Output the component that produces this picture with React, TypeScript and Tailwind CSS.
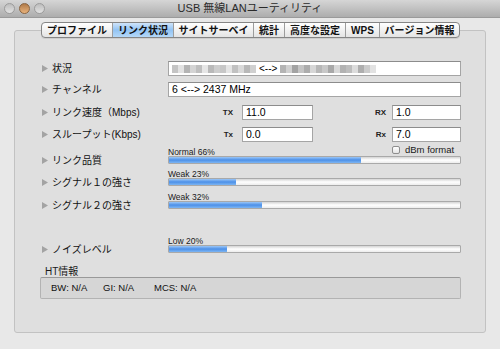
import React from 'react';

const tabs = [
  { name: 'プロファイル', w: 'w-[70px]' },
  { name: 'リンク状況', w: 'w-[61px]', active: true },
  { name: 'サイトサーベイ', w: 'w-[80px]' },
  { name: '統計', w: 'w-[31px]' },
  { name: '高度な設定', w: 'w-[61px]' },
  { name: 'WPS', w: 'w-[34px]' },
  { name: 'バージョン情報', w: 'w-[80px]' },
];

// mosaic blocks standing in for the blurred MAC addresses
const mosaicA = ['#c4c4c4', '#e2e2e2', '#b4b4b4', '#d4d4d4', '#bfbfbf', '#e6e6e6', '#b9b9b9', '#cdcdcd', '#c7c7c7', '#e5e5e5', '#c1c1c1', '#d9d9d9', '#b8b8b8', '#d0d0d0'];
const mosaicB = ['#b4b4b4', '#d0d0d0', '#a3a3a3', '#c4c4c4', '#acacac', '#d6d6d6', '#b7b7b7', '#c8c8c8', '#a8a8a8', '#d8d8d8', '#b2b2b2', '#bdbdbd', '#dcdcdc', '#aeaeae', '#cbcbcb', '#e2e2e2'];

const Arrow = () => (
  <svg width="6" height="7" viewBox="0 0 6 7" className="mr-[3px] shrink-0">
    <polygon points="0,0 6,3.5 0,7" fill="#a3a3a3" />
  </svg>
);

const Label = ({ text }: { text: string }) => (
  <div className="w-[126px] flex items-center text-[10px] text-[#111] whitespace-nowrap">
    <Arrow />
    <span className="ml-[1px]">{text}</span>
  </div>
);

const Field = ({ children, className = '' }: { children?: React.ReactNode; className?: string }) => (
  <div className={`h-[15px] bg-white border border-[#a5a5a5] border-t-[#8c8c8c] flex items-center pl-[3px] text-[10.5px] text-black ${className}`}>
    {children}
  </div>
);

const Bar = ({ pct }: { pct: number }) => (
  <div className="h-[8px] flex-1 rounded-[1px] border border-[#a9a9a9] bg-gradient-to-b from-[#d4d4d4] via-white to-[#ececec] overflow-hidden">
    <div
      className="h-full bg-gradient-to-b from-[#9ac6f7] via-[#4c90e8] to-[#7db5f2]"
      style={{ width: `${pct}%` }}
    />
  </div>
);

const MeterRow = ({ label, caption, pct, extra, className = '' }: { label: string; caption: string; pct: number; extra?: React.ReactNode; className?: string }) => (
  <div className={`flex flex-col ${className}`}>
    <div className="flex h-[8px]">
      <div className="w-[126px]" />
      <div className="flex-1 flex items-center text-[8.5px] leading-[8px] text-[#1a1a1a]">
        <span>{caption}</span>
        {extra}
      </div>
    </div>
    <div className="flex h-[8px] items-center">
      <Label text={label} />
      <Bar pct={pct} />
    </div>
  </div>
);

export default function App() {
  return (
    <div className="w-[500px] h-[349px] bg-[#e8e8e8] font-['Liberation_Sans','Noto_Sans_CJK_JP',sans-serif] overflow-hidden">
      {/* title bar */}
      <div className="relative h-[18px] bg-gradient-to-b from-[#d6d6d6] to-[#adadad] border-b border-[#9a9a9a] flex items-center justify-center">
        <div className="absolute left-[4px] top-[3px] flex gap-[4px]">
          <span className="w-[11px] h-[11px] rounded-full bg-gradient-to-b from-[#bdbdbd] to-[#e2e2e2] border border-[#9b9b9b]" />
          <span className="w-[11px] h-[11px] rounded-full bg-gradient-to-b from-[#b07a48] to-[#e9b37c] border border-[#8a6440]" />
          <span className="w-[11px] h-[11px] rounded-full bg-gradient-to-b from-[#bdbdbd] to-[#e2e2e2] border border-[#9b9b9b]" />
        </div>
        <span className="text-[11px] text-[#2a2a2a]">USB 無線LANユーティリティ</span>
      </div>

      {/* group box */}
      <div className="relative ml-[14px] mt-[12px] w-[472px] h-[303px] bg-[#dfdfdf] border border-[#c2c2c2] rounded-[3px] pl-[27px] pr-[24px] pt-[30px]">
        {/* tab strip */}
        <div className="absolute left-[26px] -top-[9px] flex h-[16px] rounded-[4px] border border-[#858585] bg-gradient-to-b from-white to-[#e4e4e4] overflow-hidden shadow-[0_1px_0_rgba(0,0,0,0.08)]">
          {tabs.map((t, i) => (
            <div
              key={t.name}
              className={`${t.w} flex items-center justify-center text-[10px] font-bold text-[#111] whitespace-nowrap ${i > 0 ? 'border-l border-[#9c9c9c]' : ''} ${t.active ? 'bg-gradient-to-b from-[#cfe4fa] via-[#92c3f3] to-[#b4d8f8]' : ''}`}
            >
              {t.name}
            </div>
          ))}
        </div>

        {/* 状況 */}
        <div className="flex h-[15px] items-center">
          <Label text="状況" />
          <Field className="flex-1">
            {mosaicA.map((c, i) => (
              <span key={i} className="w-[6px] h-[8px]" style={{ background: c }} />
            ))}
            <span className="mx-[3px] text-[10px]">{'<-->'}</span>
            {mosaicB.map((c, i) => (
              <span key={i} className="w-[6px] h-[8px]" style={{ background: c }} />
            ))}
          </Field>
        </div>

        {/* チャンネル */}
        <div className="flex h-[15px] items-center mt-[6px]">
          <Label text="チャンネル" />
          <Field className="flex-1">6 {'<-->'} 2437 MHz</Field>
        </div>

        {/* リンク速度 */}
        <div className="flex h-[15px] items-center mt-[8px]">
          <Label text="リンク速度（Mbps)" />
          <span className="w-[74px] text-right pr-[9px] text-[8px] font-bold text-[#222]">TX</span>
          <Field className="w-[71px]">11.0</Field>
          <span className="w-[79px] text-right pr-[6px] text-[8px] font-bold text-[#222]">RX</span>
          <Field className="flex-1">1.0</Field>
        </div>

        {/* スループット */}
        <div className="flex h-[15px] items-center mt-[7px]">
          <Label text="スループット(Kbps)" />
          <span className="w-[74px] text-right pr-[9px] text-[8px] font-bold text-[#222]">Tx</span>
          <Field className="w-[71px]">0.0</Field>
          <span className="w-[79px] text-right pr-[6px] text-[8px] font-bold text-[#222]">Rx</span>
          <Field className="flex-1">7.0</Field>
        </div>

        <MeterRow
          className="mt-[6px]"
          label="リンク品質"
          caption="Normal 66%"
          pct={66}
          extra={
            <div className="ml-auto w-[69px] flex items-center gap-[5px] -mt-[5px]">
              <span className="w-[8px] h-[8px] rounded-[2px] border border-[#8e8e8e] bg-gradient-to-b from-white to-[#e4e4e4]" />
              <span className="text-[9.5px]">dBm format</span>
            </div>
          }
        />
        <MeterRow className="mt-[6px]" label="シグナル１の強さ" caption="Weak 23%" pct={23} />
        <MeterRow className="mt-[7px]" label="シグナル２の強さ" caption="Weak 32%" pct={32} />
        <MeterRow className="mt-[28px]" label="ノイズレベル" caption="Low 20%" pct={20} />

        {/* HT情報 */}
        <div className="mt-[13px] ml-[3px] h-[11px] flex items-center text-[10px] text-[#1a1a1a]">HT情報</div>
        <div className="-ml-[2px] h-[22px] rounded-[2px] border border-[#b3b3b3] border-t-[#999] bg-[#d6d6d6] flex items-center text-[9.5px] text-[#111] pl-[10px]">
          <span className="w-[52px]">BW: N/A</span>
          <span className="w-[51px]">GI: N/A</span>
          <span>MCS: N/A</span>
        </div>
      </div>
    </div>
  );
}
